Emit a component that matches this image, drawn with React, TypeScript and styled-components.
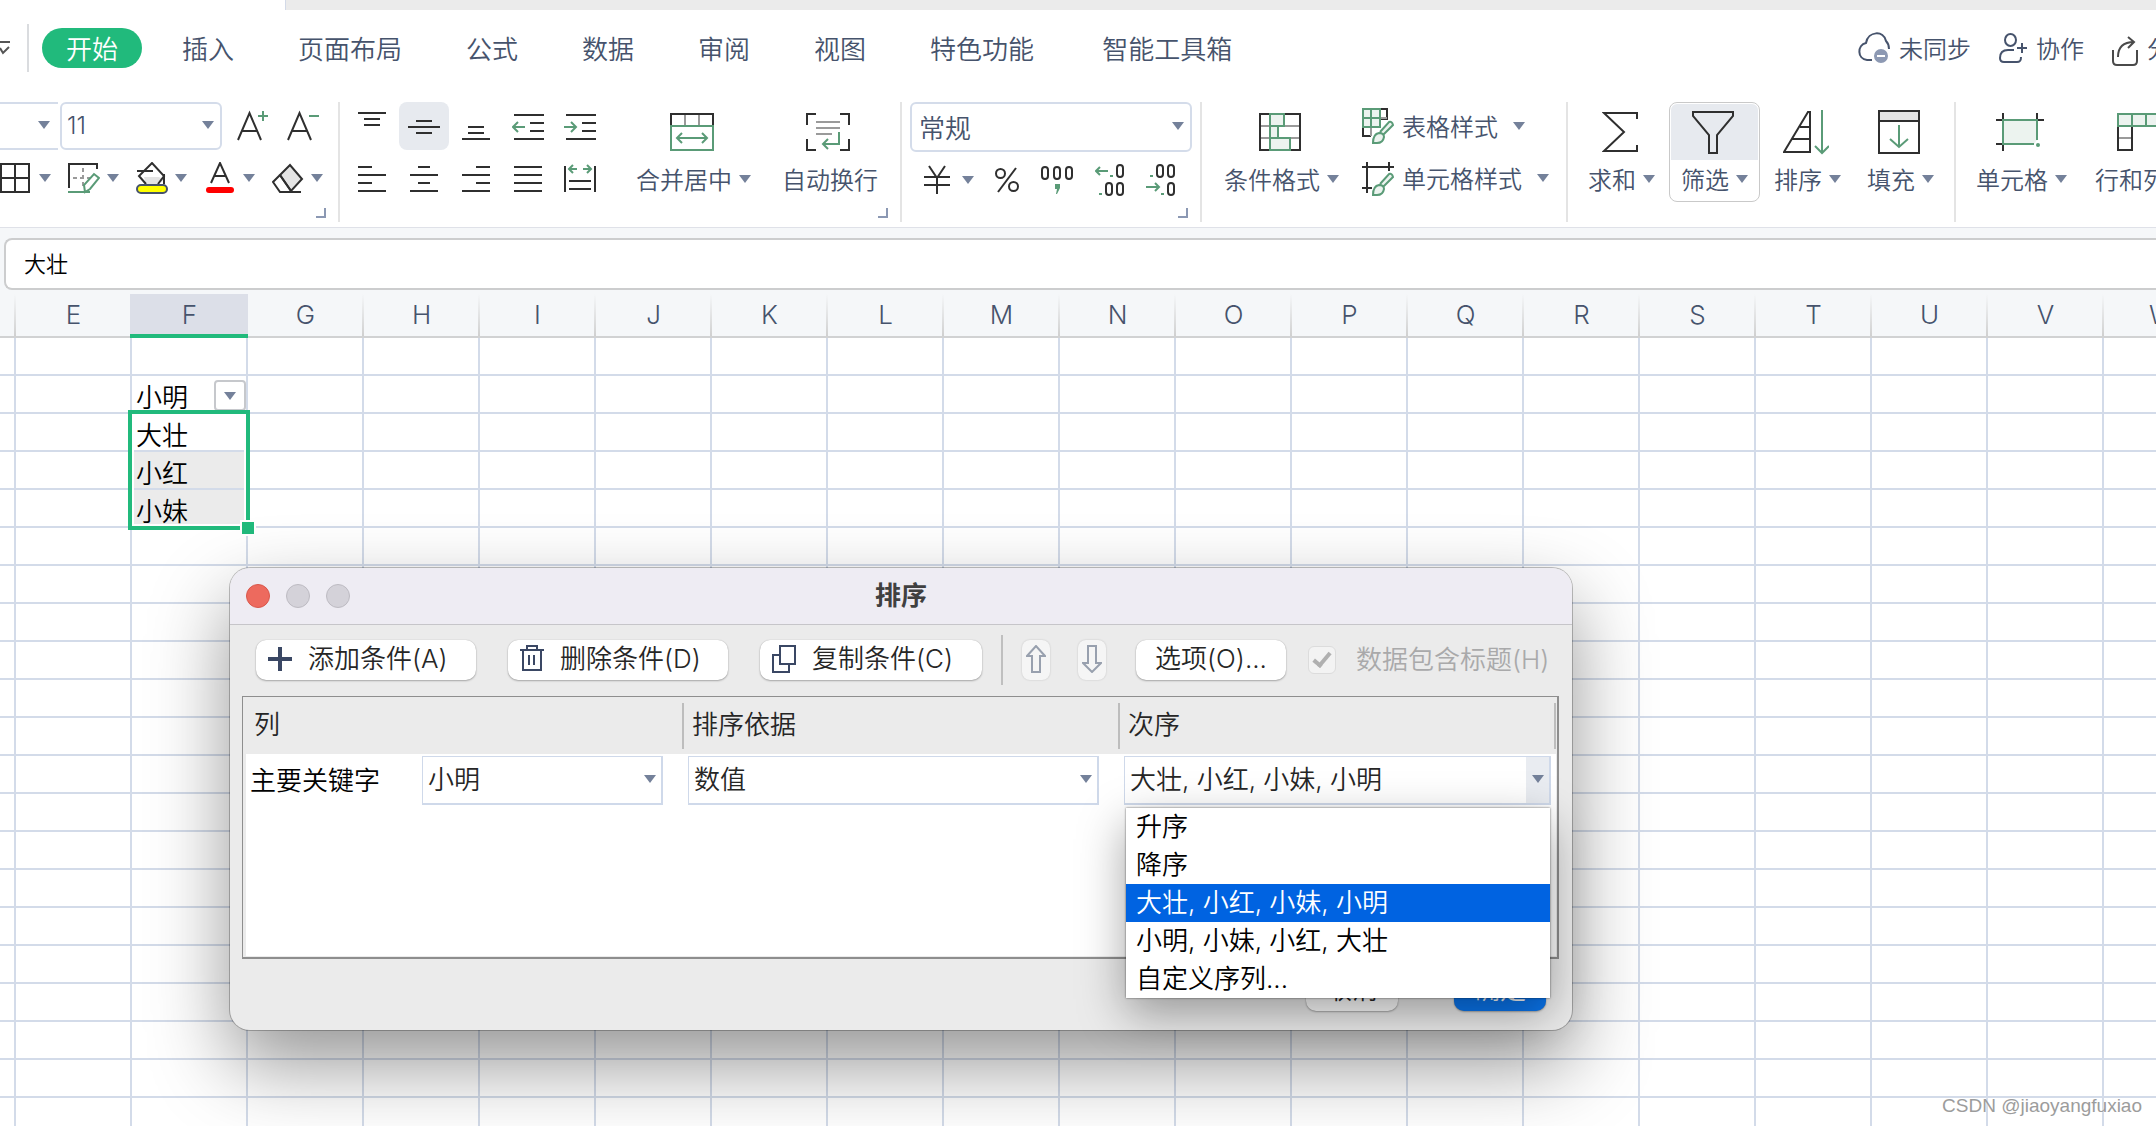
import React from 'react';
import styled, { createGlobalStyle, css } from 'styled-components';

const INK = '#2f2f2f';
const GREEN = '#5a9b77';
const PALE = '#ecf3ef';
const GREY = '#9a9a9a';
const SLATE = '#46536c';
const BRAND = '#21ba7c';

const GlobalStyle = createGlobalStyle`
  *, *::before, *::after { box-sizing: border-box; }
  html, body { margin: 0; padding: 0; }
  body {
    background: #ffffff;
    color: ${SLATE};
    font-family: "Noto Sans CJK SC", "Noto Sans", sans-serif;
    font-size: 24px;
    font-weight: 350;
    line-height: 32px;
    overflow: hidden;
  }
  button, select, input { font: inherit; color: inherit; }
  button { border: 0; padding: 0; background: none; white-space: nowrap; }
  svg { display: block; flex: none; }
`;

const Page = styled.div`
  position: relative;
  height: 100vh;
  overflow: hidden;
`;

/* ---------- top tabs ---------- */

const WindowStrip = styled.div`
  height: 10px;
  margin-left: 285px;
  background: #ebebeb;
  border-left: 1px solid #d3dae8;
`;

const MenuBar = styled.header`
  display: flex;
  align-items: center;
  height: 92px;
  padding: 14px 0 30px;
`;

const MenuDivider = styled.span`
  width: 2px;
  height: 48px;
  margin: 0 13px 0 17px;
  background: #dadcdf;
`;

const Tabs = styled.nav<{ $spaced?: boolean }>`
  display: flex;
  gap: 16px;
  font-size: 26px;
  margin-left: ${(p) => (p.$spaced ? 20 : 0)}px;
`;

const Tab = styled.button<{ $active?: boolean }>`
  height: 40px;
  padding: 0 24px;
  border-radius: 20px;
  line-height: 40px;
  ${(p) => p.$active && css`background: ${BRAND}; color: #ffffff;`}
`;

const Account = styled.div`
  display: flex;
  gap: 28px;
  margin: 0 -39px 0 auto;
`;

const AccountButton = styled.button`
  display: flex;
  align-items: center;
  gap: 9px;
  height: 40px;
`;

/* ---------- ribbon ---------- */

const Ribbon = styled.section`
  display: flex;
  padding-bottom: 5px;
  border-bottom: 1px solid #dfe1e8;
  overflow: hidden;
`;

const Group = styled.div<{ $pad: string; $gap?: number; $last?: boolean }>`
  position: relative;
  display: flex;
  flex: none;
  align-items: flex-start;
  gap: ${(p) => p.$gap ?? 0}px;
  height: 120px;
  padding: ${(p) => p.$pad};
  border-right: ${(p) => (p.$last ? 0 : 2)}px solid #e4e4e4;
`;

const Stack = styled.div`
  display: flex;
  flex-direction: column;
  gap: 12px;
`;

const Row = styled.div<{ $h: number; $gap?: number; $left?: number }>`
  display: flex;
  align-items: center;
  height: ${(p) => p.$h}px;
  gap: ${(p) => p.$gap ?? 0}px;
  padding-left: ${(p) => p.$left ?? 0}px;
`;

const IconGrid = styled.div`
  display: grid;
  grid-template-columns: repeat(5, 50px);
  grid-template-rows: 48px 32px;
  gap: 12px 2px;
`;

const IconButton = styled.button<{ $on?: boolean }>`
  display: flex;
  align-items: center;
  justify-content: center;
  min-width: 50px;
  border-radius: 8px;
  background: ${(p) => (p.$on ? '#e7eaef' : 'transparent')};
`;

const SplitButton = styled.button<{ $gap?: number }>`
  display: flex;
  align-items: center;
  gap: ${(p) => p.$gap ?? 7}px;
`;

const StyleButton = styled(SplitButton)`
  gap: 8px;
  > svg:last-child { margin-left: 7px; }
`;

const BigButton = styled.button<{ $pad?: number; $on?: boolean }>`
  display: flex;
  flex-direction: column;
  align-items: stretch;
  height: 100px;
  padding: 1px;
  border: 1px solid ${(p) => (p.$on ? '#c9c9c9' : 'transparent')};
  border-radius: 8px;
  margin: 0 ${(p) => (p.$pad ? 0 : -2)}px;
  > span { padding-left: ${(p) => p.$pad ?? 0}px; padding-right: ${(p) => p.$pad ?? 0}px; }
  > span:first-child { background: ${(p) => (p.$on ? '#e7eaef' : 'transparent')}; }
`;

const BigIcon = styled.span`
  display: flex;
  align-items: center;
  justify-content: center;
  height: 56px;
  border-radius: 6px 6px 0 0;
  > svg { margin-right: 4px; }
`;

const BigLabel = styled.span`
  display: flex;
  align-items: center;
  justify-content: center;
  gap: 7px;
  height: 40px;
  padding-bottom: 2px;
`;

const Launcher = styled.button`
  position: absolute;
  right: 12px;
  bottom: 4px;
  width: 10px;
  height: 10px;
  border-right: 2px solid #8b98b3;
  border-bottom: 2px solid #8b98b3;
`;

const FieldBox = styled.div<{ $w?: number; $h: number; $kind: 'open' | 'round' | 'square' }>`
  position: relative;
  display: flex;
  width: ${(p) => (p.$w ? `${p.$w}px` : '100%')};
  height: ${(p) => p.$h}px;
  background: #ffffff;
  ${(p) => p.$kind === 'round' && css`border: 2px solid #d4dcea; border-radius: 6px;`}
  ${(p) => p.$kind === 'open' && css`border: solid #d4dcea; border-width: 2px 0;`}
  ${(p) => p.$kind === 'square' && css`border: solid #cfd9ea; border-width: 1px 2px 2px 1px; color: #262626;`}
`;

const Field = styled.select<{ $left: number; $numeric?: boolean }>`
  appearance: none;
  flex: 1;
  min-width: 0;
  border: 0;
  padding: 0 0 1px ${(p) => p.$left}px;
  background: transparent;
  ${(p) => p.$numeric && css`font-family: Inter, sans-serif;`}
  font-size: ${(p) => (p.$numeric ? 24 : 26)}px;
  outline: 0;
`;

const FieldArrow = styled.span<{ $right: number; $shaded?: boolean }>`
  position: absolute;
  top: 0;
  bottom: 0;
  right: 0;
  display: flex;
  align-items: center;
  padding: 0 ${(p) => p.$right}px 2px ${(p) => (p.$shaded ? 6 : 0)}px;
  background: ${(p) => (p.$shaded ? '#e9ecf1' : 'transparent')};
  pointer-events: none;
`;

/* ---------- formula bar and sheet ---------- */

const FormulaBar = styled.div`
  display: flex;
  padding: 10px 0 4px 4px;
  background: #f5f7f9;
`;

const FormulaInput = styled.input`
  flex: 1;
  height: 52px;
  padding: 0 0 4px 18px;
  border: 2px solid #cccdce;
  border-right: 0;
  border-radius: 8px 0 0 8px;
  background: #ffffff;
  color: #000000;
  font-size: 22px;
  outline: 0;
`;

const Sheet = styled.table`
  table-layout: fixed;
  width: max-content;
  border-collapse: separate;
  border-spacing: 0;
  color: #000000;
  font-size: 26px;
`;

const ColHead = styled.th<{ $active?: boolean; $w?: number }>`
  position: relative;
  z-index: 0;
  width: ${(p) => p.$w ?? 116}px;
  height: 44px;
  padding: 0 1px 0 0;
  border-bottom: 2px solid #d1d2d3;
  background: linear-gradient(#f5f7f9, #d0d0d0) right / 2px 100% no-repeat #f5f7f9;
  color: ${SLATE};
  font-family: Inter, sans-serif;
  font-weight: 300;
  font-size: 26px;
  line-height: 40px;
  ${(p) => p.$active && css`
    &::before {
      content: '';
      position: absolute;
      z-index: -1;
      inset: 0 0 -2px -2px;
      background: #dcdfe8;
      border-bottom: 4px solid ${BRAND};
    }
  `}
`;

const Cell = styled.td<{ $fill?: boolean; $anchor?: boolean }>`
  position: ${(p) => (p.$anchor ? 'relative' : 'static')};
  height: 38px;
  padding: 0;
  border-right: 2px solid #d3dbe9;
  border-bottom: 2px solid #d3dbe9;
  background: ${(p) => (p.$fill ? '#ebebeb' : 'transparent')};
`;

const CellContent = styled.div`
  display: flex;
  justify-content: space-between;
  height: 36px;
  padding: 4px 0 0 4px;
`;

const FilterToggle = styled.button`
  display: flex;
  align-items: center;
  justify-content: center;
  width: 32px;
  height: 31px;
  border: 2px solid #c6c8cc;
  border-radius: 4px;
  background: #ffffff;
`;

const SelectionFrame = styled.div`
  position: absolute;
  z-index: 1;
  left: -4px;
  top: -4px;
  width: 122px;
  height: 120px;
  border: 4px solid ${BRAND};
  box-shadow: inset 0 0 0 2px #ffffff;
  &::after {
    content: '';
    position: absolute;
    right: -8px;
    bottom: -8px;
    width: 12px;
    height: 12px;
    background: ${BRAND};
    box-shadow: 0 0 0 2px #ffffff;
  }
`;

/* ---------- sort dialog ---------- */

const Dialog = styled.section`
  position: absolute;
  z-index: 2;
  left: 230px;
  top: 568px;
  width: 1342px;
  border-radius: 20px;
  background: #ebebeb;
  color: #262626;
  font-family: Inter, "Noto Sans CJK SC", sans-serif;
  font-size: 26px;
  box-shadow: 0 0 0 1px rgba(0, 0, 0, 0.24), 0 34px 80px rgba(0, 0, 0, 0.42);
`;

const TitleBar = styled.div`
  display: grid;
  grid-template-columns: 1fr auto 1fr;
  align-items: center;
  height: 57px;
  padding: 0 16px;
  border-bottom: 1px solid #c6c5c9;
  border-radius: 20px 20px 0 0;
  background: #eeecf3;
`;

const Lights = styled.div`
  display: flex;
  gap: 16px;
`;

const Light = styled.button<{ $close?: boolean }>`
  width: 24px;
  height: 24px;
  border: 1px solid ${(p) => (p.$close ? '#d9574b' : '#bdbbc2')};
  border-radius: 50%;
  background: ${(p) => (p.$close ? '#ed6a5e' : '#d4d2d9')};
`;

const Title = styled.h2`
  margin: 0;
  padding-bottom: 1px;
  color: #404040;
  font-size: 26px;
  font-weight: 700;
  line-height: 32px;
`;

const Toolbar = styled.div`
  display: flex;
  align-items: center;
  height: 71px;
  padding: 10px 24px 11px 26px;
`;

const Cluster = styled.div<{ $gap: number; $after?: number }>`
  display: flex;
  gap: ${(p) => p.$gap}px;
  margin-right: ${(p) => p.$after ?? 0}px;
`;

const PushButton = styled.button<{ $w?: number; $primary?: boolean; $center?: boolean }>`
  display: flex;
  flex: none;
  align-items: center;
  justify-content: ${(p) => (p.$center ? 'center' : 'flex-start')};
  gap: 16px;
  width: ${(p) => p.$w ?? 220}px;
  height: 40px;
  padding: 0 0 2px ${(p) => (p.$center ? 0 : 12)}px;
  border-radius: 10px;
  background: ${(p) => (p.$primary ? '#0a76f0' : '#ffffff')};
  color: ${(p) => (p.$primary ? '#ffffff' : 'inherit')};
  box-shadow: 0 0 1px rgba(0, 0, 0, 0.25), 0 1px 2px rgba(0, 0, 0, 0.28);
`;

const ArrowButton = styled.button`
  display: flex;
  align-items: center;
  justify-content: center;
  width: 28px;
  height: 40px;
  padding: 0 0 2px;
  border-radius: 8px;
  background: #f5f5f5;
  box-shadow: 0 0 2px rgba(0, 0, 0, 0.18);
`;

const ToolDivider = styled.span`
  flex: none;
  width: 2px;
  height: 50px;
  margin: 0 19px;
  background: #bfbfbf;
`;

const CheckLabel = styled.label`
  display: flex;
  align-items: center;
  gap: 20px;
  margin-left: 22px;
  color: #a9a9aa;
  white-space: nowrap;
`;

const CheckBox = styled.input`
  appearance: none;
  display: grid;
  place-items: center;
  flex: none;
  width: 28px;
  height: 28px;
  margin: 0;
  border: 1px solid #dcdcdc;
  border-radius: 6px;
  background: #f3f3f3;
  &::after {
    content: '';
    width: 10px;
    height: 18px;
    margin-top: -4px;
    border: solid #b0b0b0;
    border-width: 0 4px 4px 0;
    transform: rotate(40deg);
  }
`;

const Frame = styled.div`
  display: flex;
  flex-direction: column;
  min-height: 263px;
  margin: 0 13px 0 12px;
  padding: 0 1px 1px 3px;
  border: solid #8e8e8e;
  border-width: 1px 2px 2px 1px;
`;

const SortTable = styled.table`
  flex: none;
  width: 100%;
  table-layout: fixed;
  border-collapse: collapse;
`;

const SortHead = styled.th`
  padding: 0;
  height: 57px;
  text-align: left;
  font-weight: 350;
  > div {
    height: 46px;
    padding-left: 8px;
    border-right: 2px solid #bdbdbd;
    line-height: 44px;
  }
`;

const SortCell = styled.td<{ $right: number }>`
  padding: 2px ${(p) => p.$right}px 0 4px;
  background: #ffffff;
  ${Field} { padding-bottom: 0; }
`;

const KeyLine = styled.div`
  display: grid;
  grid-template-columns: 172px 1fr;
  align-items: center;
  color: #000000;
`;

const SortBlank = styled.div`
  flex: 1;
  background: #ffffff;
`;

const Options = styled.ul`
  position: absolute;
  z-index: 3;
  top: 51px;
  left: 1px;
  right: -1px;
  margin: 0;
  padding: 0;
  list-style: none;
  background: #ffffff;
  color: #000000;
  box-shadow: 0 0 2px rgba(0, 0, 0, 0.6), 0 16px 44px rgba(0, 0, 0, 0.36);
`;

const Option = styled.li<{ $on?: boolean }>`
  height: 38px;
  padding-left: 10px;
  line-height: 38px;
  background: ${(p) => (p.$on ? '#0063e1' : 'transparent')};
  color: ${(p) => (p.$on ? '#ffffff' : 'inherit')};
`;

const Footer = styled.div`
  display: flex;
  justify-content: flex-end;
  gap: 56px;
  padding: 12px 26px 19px;
`;

const Watermark = styled.div`
  position: absolute;
  right: 14px;
  bottom: 6px;
  color: #9c9c9c;
  font-family: "Liberation Sans", Arial, sans-serif;
  font-size: 19px;
  line-height: 28px;
  text-shadow: 0 0 2px #ffffff;
`;

/* ---------- drawings ---------- */

type SvgProps = { w: number; h: number; s?: string; sw?: number; children: React.ReactNode };

const Svg = ({ w, h, s = INK, sw = 2, children }: SvgProps) => (
  <svg width={w} height={h} viewBox={`0 0 ${w} ${h}`} fill="none" stroke={s} strokeWidth={sw} aria-hidden="true">
    {children}
  </svg>
);

const Caret = () => (
  <svg width="12" height="8" viewBox="0 0 12 8" aria-hidden="true"><path d="M0 0h12L6 8z" fill="#74819a" /></svg>
);

const FontSizeIcon = ({ grow }: { grow?: boolean }) => (
  <Svg w={32} h={32}>
    <path d="M1 30 12.5 3 24 30M5 21h15" />
    <path d={grow ? 'M21 6h10M26 1v10' : 'M22 6h10'} stroke={GREEN} />
  </Svg>
);

const BorderIcon = () => <Svg w={32} h={32}><path d="M1 2h28v28H1zM15 2v28M1 16h28" /></Svg>;

const DrawBorderIcon = () => (
  <Svg w={32} h={32}>
    <path d="M1 26V2h28v5" />
    <path d="M15 6v18M5 16h18" stroke={GREY} strokeDasharray="4 3" />
    <path d="M17 30l-1-7 10-11 5 4-9 11zM0 30h22" stroke={GREEN} />
  </Svg>
);

const FillIcon = () => (
  <Svg w={32} h={32}>
    <path d="M8 15h15l5 3-6 5H10z" fill="#e4e4e4" stroke="none" />
    <path d="M10 22 3 14 16 1l12 13-6 8M28 12v10M1 9h16" />
    <rect x="1" y="23" width="30" height="8" rx="4" fill="#ffff00" stroke={SLATE} />
  </Svg>
);

const FontColorIcon = () => (
  <Svg w={32} h={32}>
    <path d="M7 21 16 1l9 20M10 14h12" />
    <path d="M5 28h22" stroke="#ff0000" strokeWidth="6" strokeLinecap="round" />
  </Svg>
);

const EraserIcon = () => (
  <Svg w={32} h={32}>
    <path d="M8 13 18 3l12 14-11 12z" fill="#e4e4e4" />
    <path d="M8 13 1 20l7 10h21M8 13l11 16-1 1" />
  </Svg>
);

const Lines = ({ rows, w = 32 }: { rows: [number, number, number][]; w?: number }) => (
  <Svg w={w} h={32}><path d={rows.map(([x1, x2, y]) => `M${x1} ${y}H${x2}`).join('')} /></Svg>
);

const IndentIcon = ({ out }: { out?: boolean }) => (
  <Svg w={32} h={32}>
    <path d="M2 5h30M18 13h14M18 21h14M2 29h30" />
    <path d={out ? 'M1 17h12M6 12l-5 5 5 5' : 'M0 17h12M7 12l5 5-5 5'} stroke={GREEN} />
  </Svg>
);

const DistributeIcon = () => (
  <Svg w={32} h={32}>
    <path d="M1 4v26M31 4v26M5 19h22M5 27h22" />
    <path d="M5 7h8M9 3 5 7l4 4M19 7h8M23 3l4 4-4 4" stroke={GREEN} />
  </Svg>
);

const MergeIcon = () => (
  <Svg w={44} h={38}>
    <path d="M15 2v10M29 2v10" stroke={GREY} />
    <path d="M1 13V1h42v12" />
    <path d="M1 13h42v24H1zM7 25h30M12 20l-5 5 5 5M32 20l5 5-5 5" stroke={GREEN} />
  </Svg>
);

const WrapIcon = () => (
  <Svg w={44} h={38}>
    <path d="M1 12V1h9M34 1h9v11M1 26v11h9M34 37h9V26" />
    <path d="M10 9h24M10 15h24M10 21h16" stroke={GREY} />
    <path d="M33 19v12H17M22 26l-5 5 5 5" stroke={GREEN} />
  </Svg>
);

const YuanIcon = () => <Svg w={26} h={32}><path d="M5 2l8 12 8-12M13 14v16M0 13h26M0 21h26" /></Svg>;

const PercentIcon = () => (
  <Svg w={24} h={32}>
    <circle cx="5.5" cy="9.5" r="4.5" /><circle cx="18.5" cy="22.5" r="4.5" /><path d="M21 4 3 28" />
  </Svg>
);

const Zero = ({ x, y }: { x: number; y: number }) => <rect x={x} y={y} width="6" height="12" rx="3" />;

const ThousandsIcon = () => (
  <Svg w={34} h={32}>
    <Zero x={2} y={3} /><Zero x={14} y={3} /><Zero x={26} y={3} />
    <path d="M15 20h5v4l-3 6h-1l1-5h-2z" fill={GREEN} stroke="none" />
  </Svg>
);

const DecimalIcon = ({ more }: { more?: boolean }) => (
  <Svg w={30} h={32}>
    {more ? (
      <>
        <Zero x={22} y={1} /><Zero x={11} y={19} /><Zero x={22} y={19} />
        <path d="M1 7h12M5 3 1 7l4 4M15 12h3M4 30h3" stroke={GREEN} />
      </>
    ) : (
      <>
        <Zero x={11} y={1} /><Zero x={22} y={1} /><Zero x={22} y={19} />
        <path d="M0 23h12M9 19l4 4-4 4M4 12h3M15 30h3" stroke={GREEN} />
      </>
    )}
  </Svg>
);

const ConditionIcon = () => (
  <Svg w={42} h={38}>
    <path d="M1 13h40M1 25h40" stroke={GREY} />
    <path d="M1 1h40v36H1z" />
    <path d="M11 1h14v12H11zM11 13h8v12h-8zM11 25h20v12H11z" fill={PALE} stroke={GREEN} />
  </Svg>
);

const Brush = () => (
  <path d="M11 35q0-9 6-10 5 0 5 4-1 6-7 6zM18 24l9-10q3-1 4 3l-9 9" fill={PALE} stroke={GREEN} />
);

const TableStyleIcon = () => (
  <Svg w={32} h={36}>
    <path d="M19 1h6v10h-6M1 20v8h8" /><path d="M9 20v8M17 10h8" stroke={GREY} />
    <path d="M1 1h17v18H1zM9 1v18M1 10h17" fill={PALE} stroke={GREEN} />
    <Brush />
  </Svg>
);

const CellStyleIcon = () => (
  <Svg w={32} h={36}><path d="M0 7h32M5 2v31M27 2v9M0 28h10" /><Brush /></Svg>
);

const SumIcon = () => <Svg w={36} h={42}><path d="M35 8V2H2l20 19L2 40h33v-6" /></Svg>;

const FunnelIcon = () => (
  <Svg w={42} h={44}><path d="M1 2h40v4L25 25v18h-8V25L1 6z" /></Svg>
);

const SortIcon = () => (
  <Svg w={46} h={46}>
    <path d="M1 43 25 3h2v40zM17 18h10M9 30h18" />
    <path d="M39 1v43M32 37l7 7 7-7" stroke={GREEN} />
  </Svg>
);

const FillDownIcon = () => (
  <Svg w={42} h={46}>
    <path d="M1 2h40v10H1z" fill="#e4e4e4" /><path d="M1 2h40v42H1z" />
    <path d="M21 16v22M12 30l9 8 9-8" stroke={GREEN} />
  </Svg>
);

const CellsIcon = () => (
  <Svg w={48} h={38}>
    <path d="M0 7h48M7 0v38M41 0v7M0 31h7" />
    <path d="M38 31H7V7h34v20" fill={PALE} stroke={GREEN} /><circle cx="42" cy="32" r="2" fill={GREEN} stroke="none" />
  </Svg>
);

const RowsColsIcon = () => (
  <Svg w={44} h={38}>
    <path d="M1 13v24h14V13" /><path d="M2 25h12" stroke={GREY} />
    <path d="M1 1h42v12H1zM15 1v12M29 1v12" fill={PALE} stroke={GREEN} />
  </Svg>
);

const CloudIcon = () => (
  <Svg w={32} h={34} s={SLATE}>
    <path d="M14 29H9C-1 28-1 14 8 12 10 0 26-1 28 10c3 3 3 5 3 8" />
    <circle cx="23" cy="25" r="8" fill="#8d99b3" stroke="#ffffff" /><path d="M19 25h8" stroke="#ffffff" />
  </Svg>
);

const PersonIcon = () => (
  <Svg w={28} h={32} s={SLATE}>
    <ellipse cx="11.5" cy="8" rx="5.5" ry="6" />
    <path d="M15 18H9c-5 0-8 3-8 8 0 3 1 4 4 4h13c3 0 4-1 4-5M18 16h10M23 11v10" />
  </Svg>
);

const ShareIcon = () => (
  <Svg w={26} h={36} s="#4a4a4a">
    <path d="M1 20v11c0 3 1 4 4 4h16c3 0 4-1 4-4V20M6 27C6 16 12 12 22 12M16 7l6 5-6 6" />
  </Svg>
);

const PlusIcon = () => <Svg w={24} h={24} s="#3a4764" sw={4}><path d="M12 0v24M0 12h24" /></Svg>;

const TrashIcon = () => (
  <Svg w={24} h={30} s="#3a4764"><path d="M0 6h24M3 6v20h18V6M7 5V2h10v3M9 11v10M14 11v10" /></Svg>
);

const CopyIcon = () => (
  <Svg w={24} h={28} s="#3a4764"><path d="M7 10H1v17h16v-7M8 1h15v18H8z" /></Svg>
);

const ArrowIcon = ({ down }: { down?: boolean }) => (
  <Svg w={20} h={28} s="#98a0ae">
    <path d={down ? 'M6 1h8v17h5l-9 9-9-9h5z' : 'M6 27h8V11h5L10 1 1 11h5z'} />
  </Svg>
);

/* ---------- composition ---------- */

const Big = ({ icon, label, caret = true, pad, on }: {
  icon: React.ReactNode; label: string; caret?: boolean; pad?: number; on?: boolean;
}) => (
  <BigButton type="button" $pad={pad} $on={on}>
    <BigIcon>{icon}</BigIcon>
    <BigLabel>{label}{caret && <Caret />}</BigLabel>
  </BigButton>
);

const columns = 'EFGHIJKLMNOPQRSTUVW'.split('');
const names: Record<number, string> = { 1: '小明', 2: '大壮', 3: '小红', 4: '小妹' };
const orders = ['升序', '降序', '大壮, 小红, 小妹, 小明', '小明, 小妹, 小红, 大壮', '自定义序列...'];

const RibbonArea = () => (
  <Ribbon aria-label="开始">
    <Group $pad="0 10px 0 0">
      <Stack>
        <Row $h={48}>
          <FieldBox $w={58} $h={48} $kind="open">
            <Field $left={0} aria-label="字体"><option></option></Field>
            <FieldArrow $right={8}><Caret /></FieldArrow>
          </FieldBox>
          <Row $h={48} $left={2}>
            <FieldBox $w={162} $h={48} $kind="round">
              <Field $left={5} $numeric aria-label="字号"><option>11</option></Field>
              <FieldArrow $right={6}><Caret /></FieldArrow>
            </FieldBox>
          </Row>
          <Row $h={48} $left={6}>
            <IconButton type="button" aria-label="增大字号"><FontSizeIcon grow /></IconButton>
            <IconButton type="button" aria-label="减小字号"><FontSizeIcon /></IconButton>
          </Row>
        </Row>
        <Row $h={32} $gap={17}>
          <SplitButton type="button" aria-label="边框"><BorderIcon /><Caret /></SplitButton>
          <SplitButton type="button" aria-label="绘制边框"><DrawBorderIcon /><Caret /></SplitButton>
          <SplitButton type="button" aria-label="填充颜色"><FillIcon /><Caret /></SplitButton>
          <SplitButton type="button" aria-label="字体颜色"><FontColorIcon /><Caret /></SplitButton>
          <SplitButton type="button" aria-label="清除"><EraserIcon /><Caret /></SplitButton>
        </Row>
      </Stack>
      <Launcher type="button" aria-label="字体设置" />
    </Group>

    <Group $pad="0 22px 0 7px" $gap={31}>
      <IconGrid>
        <IconButton type="button" aria-label="顶端对齐"><Lines w={28} rows={[[0, 28, 3], [6, 22, 9], [6, 22, 15]]} /></IconButton>
        <IconButton type="button" aria-label="垂直居中" $on><Lines rows={[[8, 24, 11], [0, 32, 17], [8, 24, 23]]} /></IconButton>
        <IconButton type="button" aria-label="底端对齐"><Lines w={28} rows={[[6, 22, 17], [6, 22, 23], [0, 28, 29]]} /></IconButton>
        <IconButton type="button" aria-label="减少缩进"><IndentIcon out /></IconButton>
        <IconButton type="button" aria-label="增加缩进"><IndentIcon /></IconButton>
        <IconButton type="button" aria-label="左对齐"><Lines w={28} rows={[[0, 14, 5], [0, 28, 13], [0, 14, 21], [0, 28, 29]]} /></IconButton>
        <IconButton type="button" aria-label="水平居中"><Lines w={28} rows={[[8, 20, 5], [0, 28, 13], [8, 20, 21], [0, 28, 29]]} /></IconButton>
        <IconButton type="button" aria-label="右对齐"><Lines w={28} rows={[[14, 28, 5], [0, 28, 13], [14, 28, 21], [0, 28, 29]]} /></IconButton>
        <IconButton type="button" aria-label="两端对齐"><Lines w={28} rows={[[0, 28, 5], [0, 28, 13], [0, 28, 21], [0, 28, 29]]} /></IconButton>
        <IconButton type="button" aria-label="分散对齐"><DistributeIcon /></IconButton>
      </IconGrid>
      <Big icon={<MergeIcon />} label="合并居中" />
      <Big icon={<WrapIcon />} label="自动换行" caret={false} />
      <Launcher type="button" aria-label="对齐设置" />
    </Group>

    <Group $pad="0 8px">
      <Stack>
        <FieldBox $w={282} $h={50} $kind="round">
          <Field $left={7} aria-label="数字格式"><option>常规</option></Field>
          <FieldArrow $right={6}><Caret /></FieldArrow>
        </FieldBox>
        <Row $h={32} $gap={21} $left={14}>
          <SplitButton type="button" $gap={12} aria-label="货币"><YuanIcon /><Caret /></SplitButton>
          <SplitButton type="button" aria-label="百分比"><PercentIcon /></SplitButton>
          <SplitButton type="button" aria-label="千位分隔"><ThousandsIcon /></SplitButton>
          <SplitButton type="button" aria-label="增加小数位"><DecimalIcon more /></SplitButton>
          <SplitButton type="button" aria-label="减少小数位"><DecimalIcon /></SplitButton>
        </Row>
      </Stack>
      <Launcher type="button" aria-label="数字设置" />
    </Group>

    <Group $pad="0 17px 0 22px" $gap={23}>
      <Big icon={<ConditionIcon />} label="条件格式" />
      <Stack>
        <Row $h={48}><StyleButton type="button"><TableStyleIcon />表格样式<Caret /></StyleButton></Row>
        <Row $h={32}><StyleButton type="button"><CellStyleIcon />单元格样式<Caret /></StyleButton></Row>
      </Stack>
    </Group>

    <Group $pad="0 8px" $gap={2}>
      <Big pad={10} icon={<SumIcon />} label="求和" />
      <Big pad={10} icon={<FunnelIcon />} label="筛选" on />
      <Big pad={10} icon={<SortIcon />} label="排序" />
      <Big pad={10} icon={<FillDownIcon />} label="填充" />
    </Group>

    <Group $pad="0 8px" $gap={4} $last>
      <Big pad={10} icon={<CellsIcon />} label="单元格" />
      <Big pad={10} icon={<RowsColsIcon />} label="行和列" />
    </Group>
  </Ribbon>
);

const SheetArea = () => (
  <Sheet>
    <thead>
      <tr>
        <ColHead $w={16} />
        {columns.map((c) => <ColHead key={c} $active={c === 'F'}>{c}</ColHead>)}
      </tr>
    </thead>
    <tbody>
      {Array.from({ length: 22 }, (_, r) => (
        <tr key={r}>
          <Cell />
          {columns.map((c) => {
            const text = c === 'F' ? names[r] : undefined;
            return (
              <Cell key={c} $fill={!!text && r > 2} $anchor={!!text && r === 2}>
                {text && (
                  <CellContent>
                    {text}
                    {r === 1 && <FilterToggle type="button" aria-label="筛选"><Caret /></FilterToggle>}
                  </CellContent>
                )}
                {text && r === 2 && <SelectionFrame />}
              </Cell>
            );
          })}
        </tr>
      ))}
    </tbody>
  </Sheet>
);

const SortDialog = () => (
  <Dialog role="dialog" aria-labelledby="sort-title">
    <TitleBar>
      <Lights>
        <Light type="button" $close aria-label="关闭" />
        <Light type="button" disabled aria-label="最小化" />
        <Light type="button" disabled aria-label="缩放" />
      </Lights>
      <Title id="sort-title">排序</Title>
    </TitleBar>
    <Toolbar>
      <Cluster $gap={32}>
        <PushButton type="button"><PlusIcon />添加条件(A)</PushButton>
        <PushButton type="button"><TrashIcon />删除条件(D)</PushButton>
        <PushButton type="button" $w={222}><CopyIcon />复制条件(C)</PushButton>
      </Cluster>
      <ToolDivider />
      <Cluster $gap={28} $after={30}>
        <ArrowButton type="button" disabled aria-label="上移"><ArrowIcon /></ArrowButton>
        <ArrowButton type="button" disabled aria-label="下移"><ArrowIcon down /></ArrowButton>
      </Cluster>
      <PushButton type="button" $w={150} $center>选项(O)...</PushButton>
      <CheckLabel><CheckBox type="checkbox" defaultChecked disabled />数据包含标题(H)</CheckLabel>
    </Toolbar>
    <Frame>
      <SortTable>
        <colgroup><col style={{ width: 438 }} /><col /><col /></colgroup>
        <thead>
          <tr>
            <SortHead><div>列</div></SortHead>
            <SortHead id="sort-by"><div>排序依据</div></SortHead>
            <SortHead id="sort-order"><div>次序</div></SortHead>
          </tr>
        </thead>
        <tbody>
          <tr>
            <SortCell $right={21}>
              <KeyLine>
                <label htmlFor="sort-key">主要关键字</label>
                <FieldBox $h={49} $kind="square">
                  <Field id="sort-key" $left={5}><option>小明</option></Field>
                  <FieldArrow $right={5}><Caret /></FieldArrow>
                </FieldBox>
              </KeyLine>
            </SortCell>
            <SortCell $right={21}>
              <FieldBox $h={49} $kind="square">
                <Field aria-labelledby="sort-by" $left={5}><option>数值</option></Field>
                <FieldArrow $right={5}><Caret /></FieldArrow>
              </FieldBox>
            </SortCell>
            <SortCell $right={5}>
              <FieldBox $h={49} $kind="square">
                <Field aria-labelledby="sort-order" $left={5}><option>{orders[2]}</option></Field>
                <FieldArrow $right={5} $shaded><Caret /></FieldArrow>
                <Options role="listbox" aria-labelledby="sort-order">
                  {orders.map((o, i) => (
                    <Option key={o} role="option" aria-selected={i === 2} $on={i === 2}>{o}</Option>
                  ))}
                </Options>
              </FieldBox>
            </SortCell>
          </tr>
        </tbody>
      </SortTable>
      <SortBlank />
    </Frame>
    <Footer>
      <PushButton type="button" $w={92} $center>取消</PushButton>
      <PushButton type="button" $w={92} $center $primary>确定</PushButton>
    </Footer>
  </Dialog>
);

export default function App() {
  return (
    <Page>
      <GlobalStyle />
      <WindowStrip />
      <MenuBar>
        <Svg w={10} h={16} s="#555555"><path d="M0 2h10M0 8l3 5 6-6" /></Svg>
        <MenuDivider />
        <Tabs>
          <Tab type="button" $active>开始</Tab>
          {['插入', '页面布局', '公式', '数据', '审阅', '视图', '特色功能'].map((t) => <Tab key={t} type="button">{t}</Tab>)}
        </Tabs>
        <Tabs $spaced><Tab type="button">智能工具箱</Tab></Tabs>
        <Account>
          <AccountButton type="button"><CloudIcon />未同步</AccountButton>
          <AccountButton type="button"><PersonIcon />协作</AccountButton>
          <AccountButton type="button"><ShareIcon />分享</AccountButton>
        </Account>
      </MenuBar>
      <RibbonArea />
      <FormulaBar><FormulaInput aria-label="编辑栏" defaultValue="大壮" /></FormulaBar>
      <SheetArea />
      <SortDialog />
      <Watermark>CSDN @jiaoyangfuxiao</Watermark>
    </Page>
  );
}
